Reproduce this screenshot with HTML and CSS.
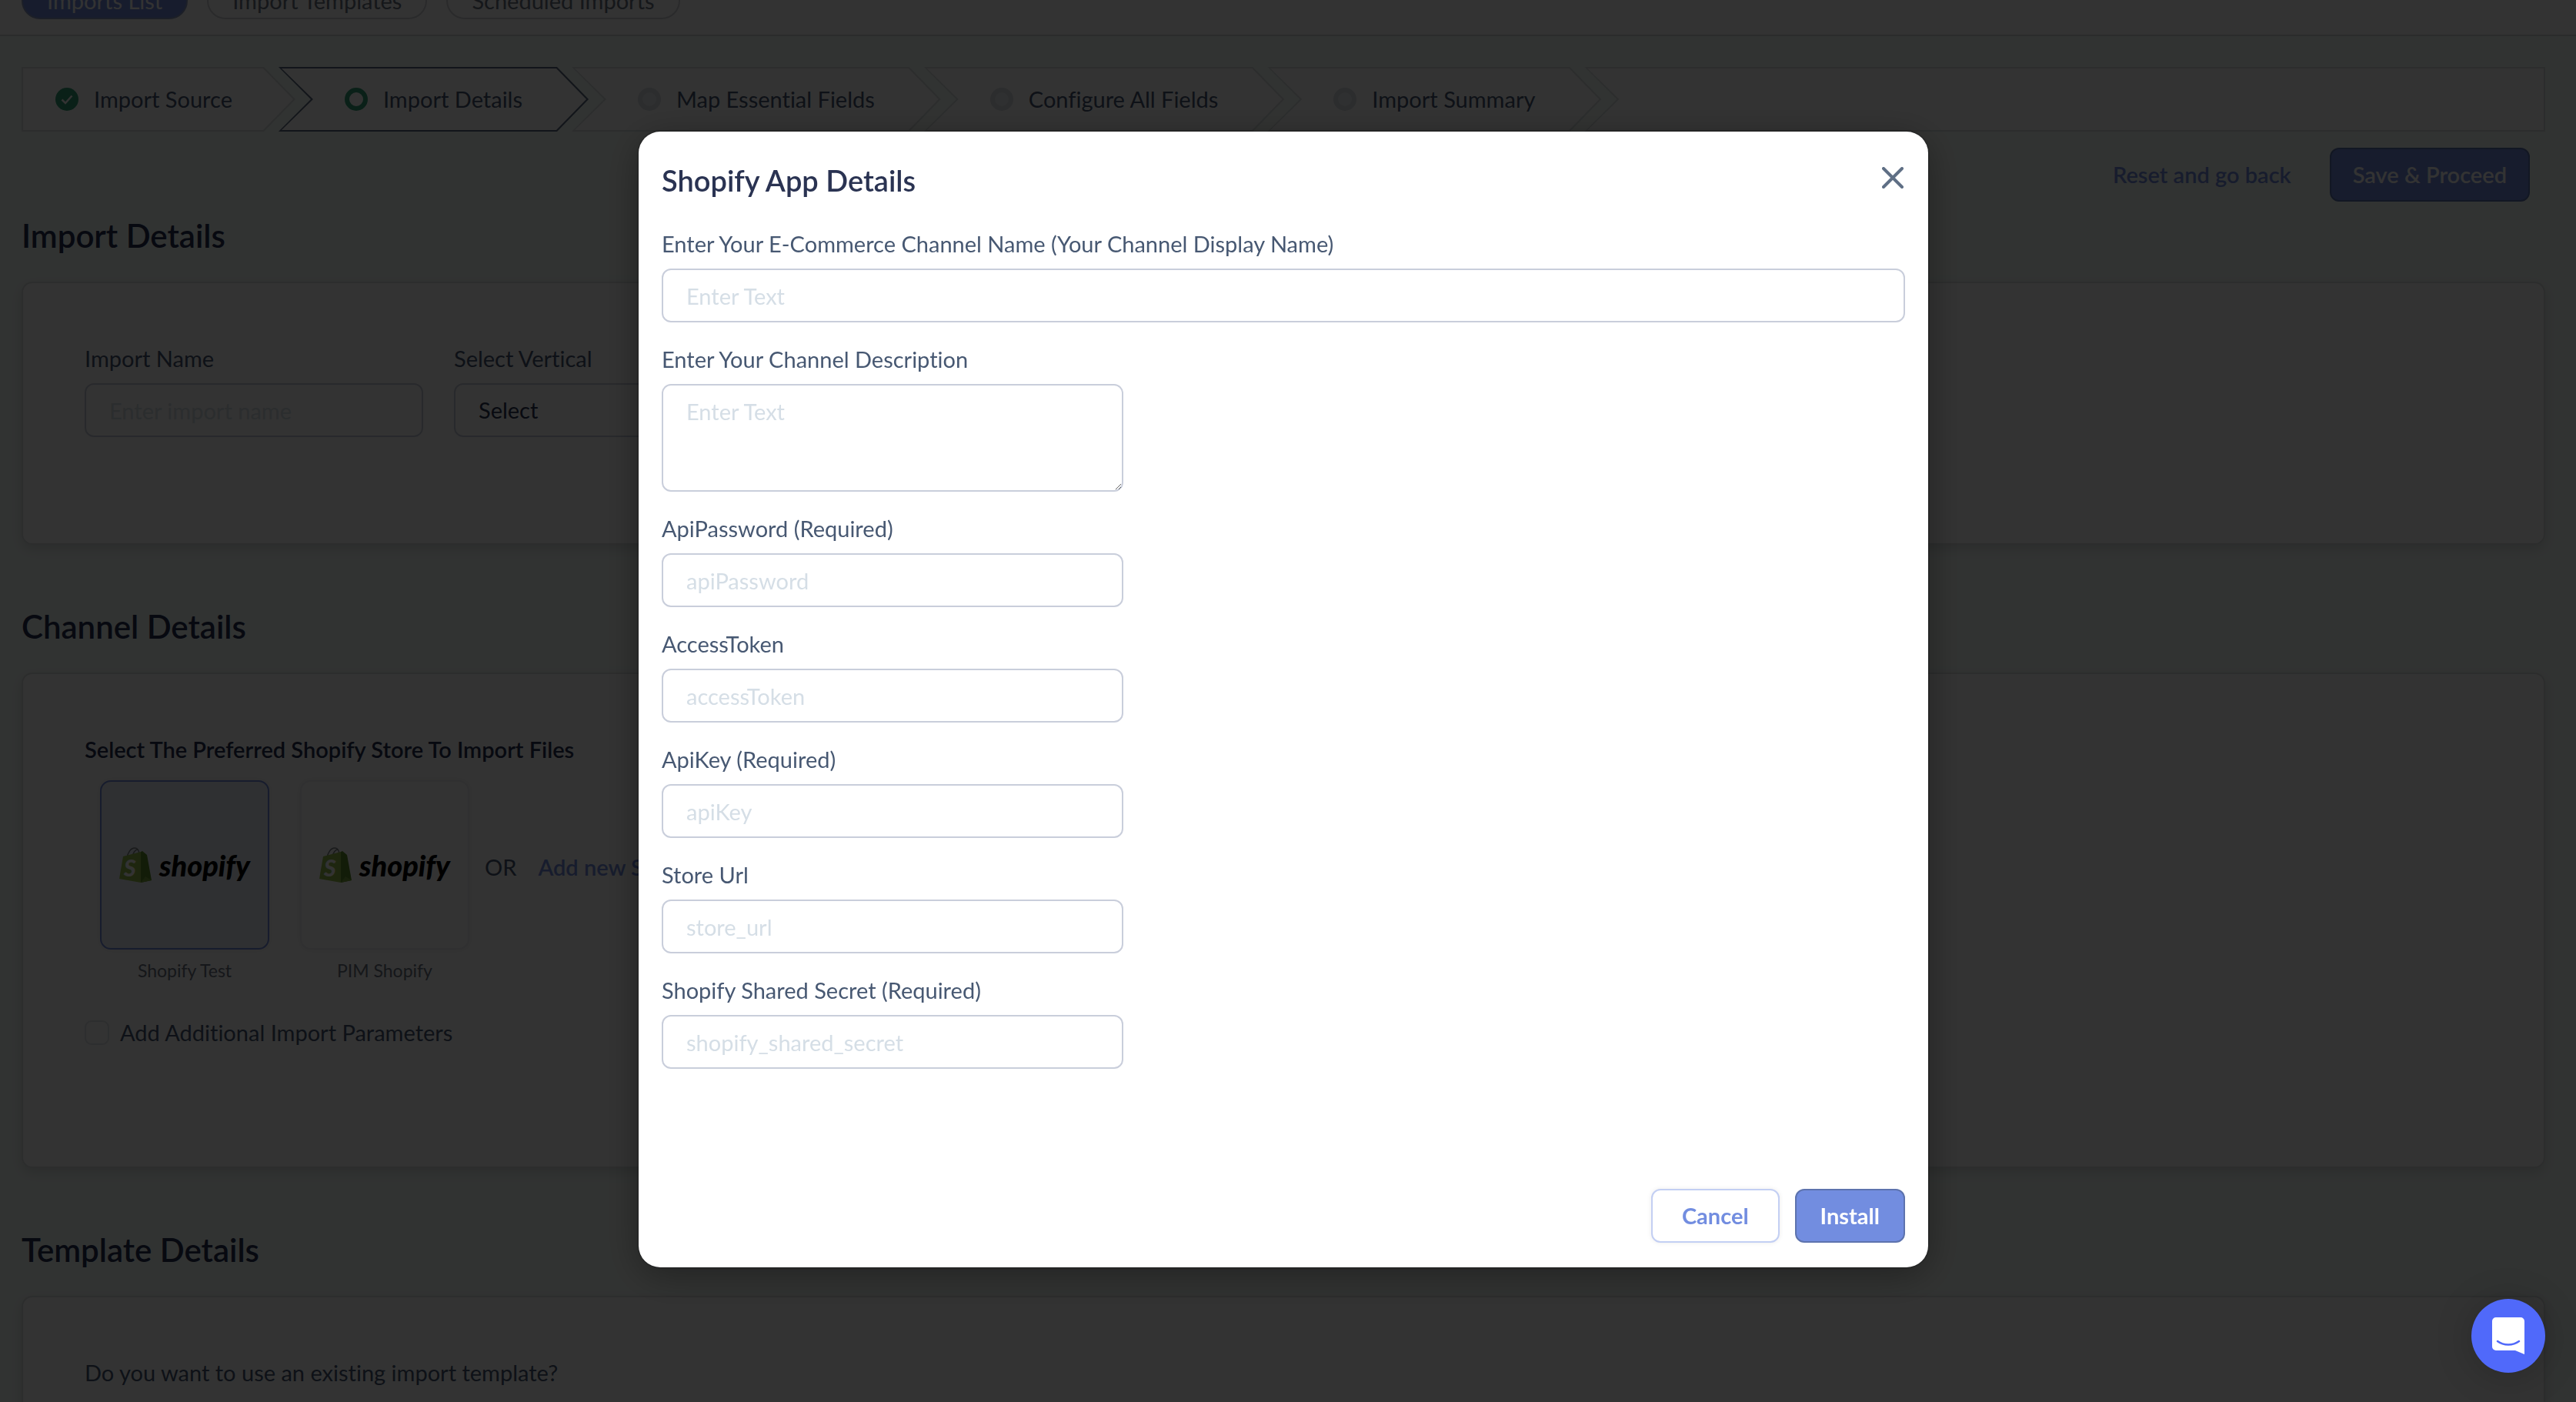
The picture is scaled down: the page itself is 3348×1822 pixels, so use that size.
FILE: index.html
```html
<!DOCTYPE html>
<html lang="en">
<head>
  <meta charset="utf-8">
  <meta name="viewport" content="width=device-width, initial-scale=1">
  <title>Import Details</title>
  <link rel="stylesheet" href="styles.css">
</head>
<body>
  <svg class="sprite" aria-hidden="true">
    <symbol id="shopify-bag" viewBox="0 0 42 46">
      <path d="M10 14C11 7 15 1 20 1c4 0 6 4 6 9M17 12c1-5 4-9 7-9" fill="none" stroke="#7d8085" stroke-width="1.6"/>
      <path d="M5 12 28 6V46L0 41z" fill="#97bf4b"/>
      <path d="M28 6 30 5l6 5 6 33-14 3z" fill="#5c8a2c"/>
      <path d="M28 46l6-8 8 5z" fill="#79a63c"/>
      <text x="6" y="38" class="bag-letter">S</text>
    </symbol>
  </svg>

  <header class="topbar">
    <nav class="tabs">
      <button class="tab tab-active" type="button">Imports List</button>
      <button class="tab" type="button">Import Templates</button>
      <button class="tab" type="button">Scheduled Imports</button>
    </nav>
  </header>

  <main class="page">
    <ol class="stepper">
      <li class="step step-first">
        <svg class="step-icon" viewBox="0 0 30 30"><circle cx="15" cy="15" r="15" fill="#36a078"/><path d="M8.500 15.500l4.500 4.500 8.500-9.500" fill="none" stroke="#fff" stroke-width="2.500"/></svg>
        <span>Import Source</span>
      </li>
      <li class="step step-current">
        <svg class="step-icon" viewBox="0 0 30 30"><circle cx="15" cy="15" r="12" fill="none" stroke="#36a078" stroke-width="6"/></svg>
        <span>Import Details</span>
      </li>
      <li class="step">
        <svg class="step-icon" viewBox="0 0 30 30"><circle cx="15" cy="15" r="12" fill="#eceff2" stroke="#d9dee4" stroke-width="6"/></svg>
        <span>Map Essential Fields</span>
      </li>
      <li class="step">
        <svg class="step-icon" viewBox="0 0 30 30"><circle cx="15" cy="15" r="12" fill="#eceff2" stroke="#d9dee4" stroke-width="6"/></svg>
        <span>Configure All Fields</span>
      </li>
      <li class="step">
        <svg class="step-icon" viewBox="0 0 30 30"><circle cx="15" cy="15" r="12" fill="#eceff2" stroke="#d9dee4" stroke-width="6"/></svg>
        <span>Import Summary</span>
      </li>
      <li class="step step-rest" aria-hidden="true"></li>
    </ol>

    <div class="actions">
      <a class="reset-link" href="#">Reset and go back</a>
      <button class="btn btn-primary" type="button">Save &amp; Proceed</button>
    </div>

    <section class="section section-first">
      <h2 class="section-title">Import Details</h2>
      <div class="card card-import">
        <div class="field field-narrow">
          <label for="import-name">Import Name</label>
          <input class="control" id="import-name" type="text" placeholder="Enter import name">
        </div>
        <div class="field field-narrow">
          <label for="vertical">Select Vertical</label>
          <select class="control" id="vertical"><option>Select</option></select>
        </div>
      </div>
    </section>

    <section class="section">
      <h2 class="section-title">Channel Details</h2>
      <div class="card card-channel">
        <h3 class="card-title">Select The Preferred Shopify Store To Import Files</h3>
        <div class="stores">
          <div class="store">
            <button class="tile tile-selected" type="button">
              <svg class="bag"><use href="#shopify-bag"/></svg><span class="wordmark">shopify</span>
            </button>
            <span class="store-name">Shopify Test</span>
          </div>
          <div class="store">
            <button class="tile" type="button">
              <svg class="bag"><use href="#shopify-bag"/></svg><span class="wordmark">shopify</span>
            </button>
            <span class="store-name">PIM Shopify</span>
          </div>
          <div class="store-alt">
            <span class="or">OR</span>
            <a class="add-link" href="#">Add new Store</a>
          </div>
        </div>
        <label class="check"><input type="checkbox">Add Additional Import Parameters</label>
      </div>
    </section>

    <section class="section">
      <h2 class="section-title">Template Details</h2>
      <div class="card card-template">
        <p class="question">Do you want to use an existing import template?</p>
      </div>
    </section>
  </main>

  <div class="overlay">
    <div class="modal" role="dialog" aria-modal="true" aria-labelledby="modal-title">
      <div class="modal-head">
        <h1 class="modal-title" id="modal-title">Shopify App Details</h1>
        <button class="close" type="button" aria-label="Close">
          <svg viewBox="0 0 28 28"><path d="M2 2l24 24M26 2L2 26" fill="none" stroke="#5f6f85" stroke-width="4" stroke-linecap="round"/></svg>
        </button>
      </div>
      <form class="form">
        <div class="field">
          <label for="channel-name">Enter Your E-Commerce Channel Name (Your Channel Display Name)</label>
          <input class="control" id="channel-name" type="text" placeholder="Enter Text">
        </div>
        <div class="field field-medium">
          <label for="description">Enter Your Channel Description</label>
          <textarea class="control" id="description" placeholder="Enter Text"></textarea>
        </div>
        <div class="field field-medium">
          <label for="api-password">ApiPassword (Required)</label>
          <input class="control" id="api-password" type="text" placeholder="apiPassword">
        </div>
        <div class="field field-medium">
          <label for="access-token">AccessToken</label>
          <input class="control" id="access-token" type="text" placeholder="accessToken">
        </div>
        <div class="field field-medium">
          <label for="api-key">ApiKey (Required)</label>
          <input class="control" id="api-key" type="text" placeholder="apiKey">
        </div>
        <div class="field field-medium">
          <label for="store-url">Store Url</label>
          <input class="control" id="store-url" type="text" placeholder="store_url">
        </div>
        <div class="field field-medium">
          <label for="shared-secret">Shopify Shared Secret (Required)</label>
          <input class="control" id="shared-secret" type="text" placeholder="shopify_shared_secret">
        </div>
        <div class="modal-foot">
          <button class="btn btn-outline" type="button">Cancel</button>
          <button class="btn btn-primary" type="submit">Install</button>
        </div>
      </form>
    </div>
  </div>

  <button class="chat" type="button" aria-label="Open chat">
    <svg viewBox="0 0 42 48"><path d="M5 0h32a5 5 0 0 1 5 5v43l-12-5H5a5 5 0 0 1-5-5V5a5 5 0 0 1 5-5z" fill="#fff"/><path d="M7 31c8 6 20 6 28 0" fill="none" stroke="#5069fa" stroke-width="2.500" stroke-linecap="round"/></svg>
  </button>
</body>
</html>
```
FILE: styles.css
```css
* {
  box-sizing: border-box;
}

body {
  margin: 0;
  height: 100vh;
  overflow: hidden;
  background: #f6fdfa;
  color: #475872;
  font-family: Lato, "Noto Sans", sans-serif;
  font-size: 29px;
  font-variant-ligatures: none;
  line-height: 36px;
}

button,
input,
select,
textarea {
  font: inherit;
  font-variant-ligatures: none;
}

h1,
h2,
h3,
p,
ol {
  margin: 0;
  padding: 0;
}

a {
  text-decoration: none;
}

.sprite {
  position: absolute;
  width: 0;
  height: 0;
}

.bag-letter {
  font: italic 900 30px Lato, sans-serif;
  fill: #fff;
}

/* Top bar */
.topbar {
  display: flex;
  align-items: flex-end;
  height: 47px;
  padding: 0 28px 20px;
  border-bottom: 2px solid #d8dadc;
  background: #fff;
}

.tabs {
  display: flex;
  gap: 25px;
}

.tab {
  height: 48px;
  padding: 0 31px;
  border: 2px solid #d0d3d8;
  border-radius: 24px;
  background: #fff;
  color: #6b7280;
  line-height: 36px;
}

.tab-active {
  border-color: #8d9cc4;
  background: #728de0;
  color: #fff;
}

/* Page */
.page {
  padding: 40px 40px 0 28px;
}

.stepper {
  display: flex;
  list-style: none;
}

.step {
  position: relative;
  display: flex;
  align-items: center;
  gap: 20px;
  height: 84px;
  margin-left: -22px;
  padding: 0 86px;
  background: #dce2e2;
  clip-path: polygon(0 0, calc(100% - 41px) 0, 100% 50%, calc(100% - 41px) 100%, 0 100%, 42px 50%);
}

.step::before {
  content: "";
  position: absolute;
  inset: 0;
  background: #fff;
  clip-path: polygon(4px 2px, calc(100% - 42px) 2px, calc(100% - 3px) 50%, calc(100% - 42px) calc(100% - 2px), 4px calc(100% - 2px), 45px 50%);
}

.step > * {
  position: relative;
}

.step-first {
  margin-left: 0;
  padding: 0 82px 0 44px;
  clip-path: polygon(0 0, calc(100% - 41px) 0, 100% 50%, calc(100% - 41px) 100%, 0 100%);
}

.step-first::before {
  clip-path: polygon(2px 2px, calc(100% - 42px) 2px, calc(100% - 3px) 50%, calc(100% - 42px) calc(100% - 2px), 2px calc(100% - 2px));
}

.step-current {
  background: #5b6b80;
}

.step-rest {
  flex: 1;
  clip-path: polygon(0 0, 100% 0, 100% 100%, 0 100%, 42px 50%);
}

.step-rest::before {
  clip-path: polygon(4px 2px, calc(100% - 2px) 2px, calc(100% - 2px) calc(100% - 2px), 4px calc(100% - 2px), 45px 50%);
}

.step-icon {
  width: 30px;
  height: 30px;
}

.actions {
  display: flex;
  justify-content: flex-end;
  align-items: center;
  gap: 50px;
  margin-top: 21px;
  padding-right: 20px;
}

.actions .btn {
  padding: 0 28px;
}

.reset-link,
.add-link {
  color: #728de0;
  font-weight: 600;
}

.section {
  margin-top: 82px;
}

.section-first {
  margin-top: 20px;
}

.section-title {
  margin-bottom: 36px;
  color: #252f50;
  font-size: 42px;
  font-weight: 600;
  line-height: 48px;
}

.card {
  padding: 80px 80px 140px;
  border: 2px solid #dde1e1;
  border-radius: 14px;
  background: #fff;
  box-shadow: 0 6px 16px rgba(0, 0, 0, 0.12);
}

.card-import {
  display: flex;
  gap: 40px;
  padding-bottom: 138px;
}

.card-channel {
  padding-bottom: 158px;
}

.card-title {
  margin-bottom: 22px;
  color: #252f50;
  font-size: 29px;
  font-weight: 600;
}

/* Fields */
.field {
  display: flex;
  flex-direction: column;
  gap: 14px;
}

.field-narrow {
  width: 440px;
}

.field-medium {
  width: 600px;
}

.control {
  width: 100%;
  height: 70px;
  padding: 0 30px;
  border: 2px solid #c9cedb;
  border-radius: 12px;
  outline: 0;
  background: #fff;
  color: #2a3352;
}

textarea.control {
  height: 140px;
  padding: 16px 30px;
  resize: both;
}

select.control {
  appearance: none;
}

.control::placeholder {
  color: #d5dee6;
  opacity: 1;
}

/* Stores */
.stores {
  display: flex;
  margin-left: 20px;
}

.store {
  display: flex;
  flex-direction: column;
  align-items: center;
  gap: 12px;
  margin-right: 40px;
}

.tile {
  display: flex;
  align-items: center;
  justify-content: center;
  gap: 10px;
  width: 220px;
  height: 220px;
  padding: 0;
  border: 2px solid #f0f0f2;
  border-radius: 14px;
  background: #fff;
  box-shadow: 0 0 8px rgba(0, 0, 0, 0.08);
}

.tile-selected {
  border-color: #728de0;
  background: #ebf1f8;
}

.bag {
  width: 42px;
  height: 46px;
}

.wordmark {
  color: #000;
  font-size: 38px;
  font-style: italic;
  font-weight: 900;
}

.store-name {
  color: #6b7280;
  font-size: 23px;
  line-height: 30px;
}

.store-alt {
  display: flex;
  align-items: center;
  gap: 28px;
  height: 220px;
  margin-left: -20px;
  padding-top: 6px;
}

.check {
  display: flex;
  align-items: center;
  gap: 14px;
  height: 32px;
  margin-top: 50px;
}

.check input {
  appearance: none;
  width: 32px;
  height: 32px;
  margin: 0;
  border: 2px solid #e2e4e8;
  border-radius: 9px;
}

/* Buttons */
.btn {
  height: 70px;
  padding: 0 31px;
  border: 2px solid #5d73ae;
  border-radius: 12px;
  font-weight: 600;
}

.btn-primary {
  background: #728de0;
  color: #fff;
}

.modal-foot .btn {
  font-weight: 700;
}

.modal-foot .btn-outline {
  padding: 0 38px;
  border-color: #c3cff3;
  background: #fff;
  color: #728de0;
  box-shadow: 0 0 6px rgba(0, 0, 0, 0.08);
}

/* Dialog */
.overlay {
  position: fixed;
  inset: 0;
  display: flex;
  justify-content: center;
  align-items: flex-start;
  padding: 171px 12px 0 0;
  background: rgba(0, 0, 0, 0.8);
}

.modal {
  width: calc(50vw + 2px);
  padding: 41px 30px 32px;
  border-radius: 28px;
  background: #fff;
  box-shadow: 0 0 3px rgba(0, 0, 0, 0.5), 0 10px 50px rgba(0, 0, 0, 0.35);
}

.modal-head {
  display: flex;
  justify-content: space-between;
  align-items: flex-start;
  margin-bottom: 43px;
}

.modal-title {
  color: #2a3352;
  font-size: 38px;
  font-weight: 600;
  line-height: 44px;
}

.close {
  display: flex;
  margin: 0;
  padding: 5px 2px;
  border: 0;
  background: none;
}

.close svg {
  width: 28px;
  height: 28px;
}

.form {
  display: flex;
  flex-direction: column;
  gap: 30px;
}

.modal-foot {
  display: flex;
  justify-content: flex-end;
  gap: 20px;
  margin-top: 126px;
}

/* Chat launcher */
.chat {
  position: fixed;
  right: 40px;
  bottom: 38px;
  display: flex;
  align-items: center;
  justify-content: center;
  width: 96px;
  height: 96px;
  padding: 0;
  border: 0;
  border-radius: 50%;
  background: #5069fa;
  box-shadow: 0 4px 50px rgba(0, 0, 0, 0.2);
}

.chat svg {
  width: 42px;
  height: 48px;
}
```
